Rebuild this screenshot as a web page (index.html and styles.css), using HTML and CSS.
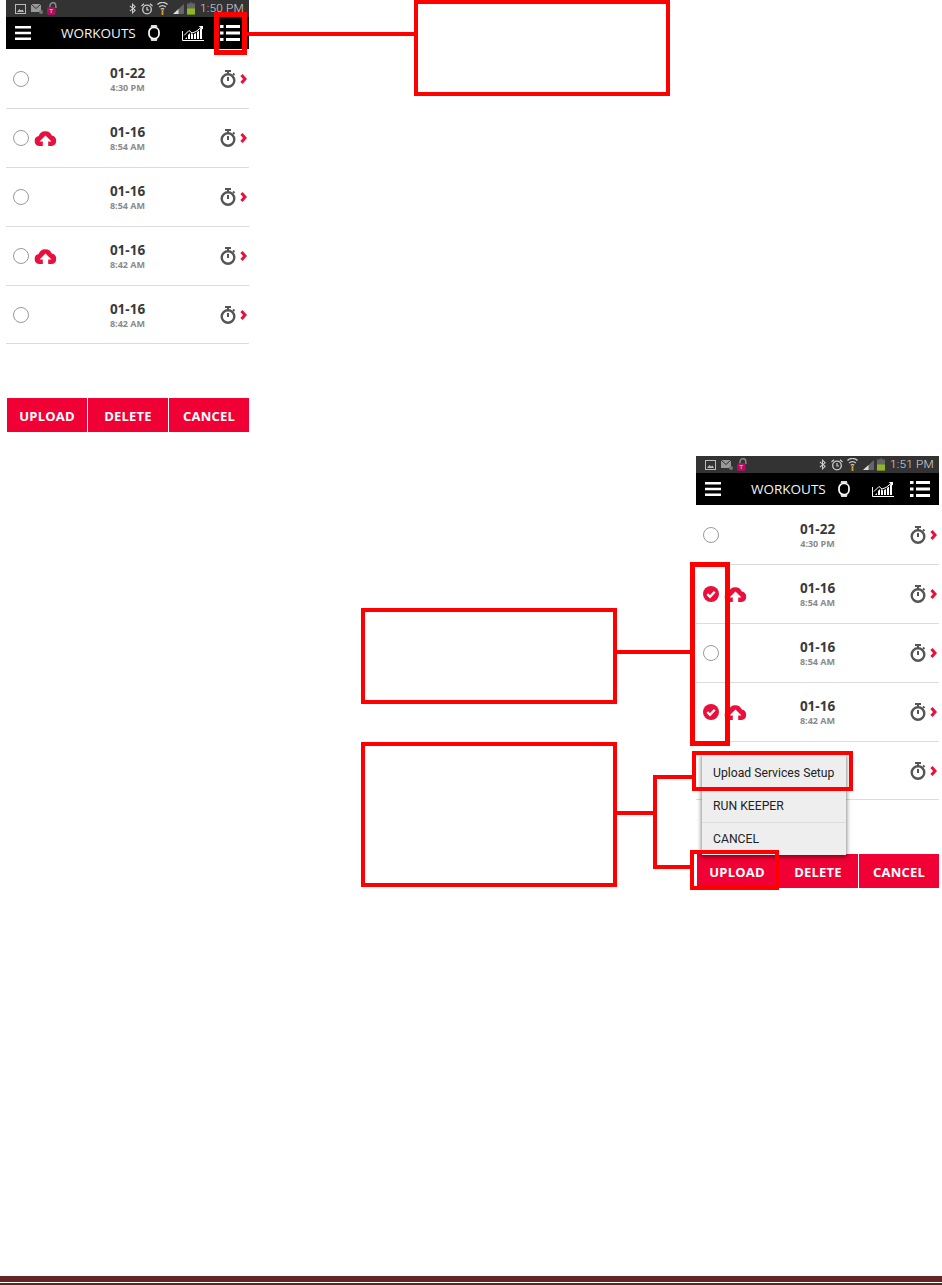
FILE: index.html
```html
<!DOCTYPE html>
<html lang="en">
<head>
<meta charset="utf-8">
<title>Workouts upload steps</title>
<link rel="stylesheet" href="styles.css">
</head>
<body>
<svg class="defs" width="0" height="0" aria-hidden="true">
  <symbol id="i-pic" viewBox="0 0 11 10"><rect x=".5" y=".5" width="10" height="9" fill="none" stroke="#bbb"/><path d="M2 8l2.500-3 1.500 1.500 1.500-1 1.500 2.500z" fill="#bbb"/></symbol>
  <symbol id="i-mail" viewBox="0 0 12 10"><rect x="0" y="0" width="10" height="8" fill="#999"/><path d="M0 0l5 4.500L10 0" fill="none" stroke="#333"/><circle cx="10" cy="8" r="2" fill="#777"/></symbol>
  <symbol id="i-lock" viewBox="0 0 10 13"><path d="M3 5V3.500a3 3 0 0 1 5.500-1.500L9 6" fill="none" stroke="#8a8a8a" stroke-width="1.500"/><rect x="0" y="5" width="8.500" height="8" rx="2" fill="#b01060"/><path d="M2.500 7.500h3.500M4.200 7.500v3.500" stroke="#e88ab8"/></symbol>
  <symbol id="i-bt" viewBox="0 0 8 12"><path d="M1 3l6 5-3 3V1l3 3-6 5" fill="none" stroke="#ccc" stroke-width="1.200"/></symbol>
  <symbol id="i-alarm" viewBox="0 0 12 12"><circle cx="6" cy="6.500" r="4.300" fill="none" stroke="#ccc" stroke-width="1.300"/><path d="M6 4v3h2M.5 3L3 .8M11.500 3L9 .8" fill="none" stroke="#ccc" stroke-width="1.200"/></symbol>
  <symbol id="i-wifi" viewBox="0 0 11 13"><path d="M.5 2.500a7 7 0 0 1 10 0M2.200 5a4.600 4.600 0 0 1 6.600 0M3.800 7.300a2.400 2.400 0 0 1 3.400 0" fill="none" stroke="#ccc" stroke-width="1.300"/><path d="M5.500 8v5" stroke="#d0a030" stroke-width="1.800"/></symbol>
  <symbol id="i-signal" viewBox="0 0 12 11"><path d="M0 11L12 0v11z" fill="#666"/><path d="M0 11l6-5.500V11z" fill="#ddd"/></symbol>
  <symbol id="i-battery" viewBox="0 0 8 12"><rect x="0" y="1" width="8" height="11" fill="#666"/><rect x="2.500" y="0" width="3" height="1" fill="#666"/><rect x="0" y="6" width="8" height="6" fill="#8fb820"/></symbol>
  <symbol id="i-menu" viewBox="0 0 16 14"><path d="M0 0h16v2.500H0zM0 5.700h16v2.500H0zM0 11.500h16V14H0z" fill="#fff"/></symbol>
  <symbol id="i-watch" viewBox="0 0 12 16"><path d="M3.200 0h5.600l.8 2.500H2.400zM2.400 13.500h7.200L8.800 16H3.200z" fill="#ddd"/><rect x="1" y="2.500" width="10" height="11" rx="4.500" fill="none" stroke="#fff" stroke-width="1.700"/></symbol>
  <symbol id="i-chart" viewBox="0 0 22 15"><path d="M.5 5v9.500H22" fill="none" stroke="#fff"/><path d="M3 13l2-2v2zM6 13V9l2-2v6zM9 13V7l2 1.500V13zM12 13V8l2-1v6zM15 13V6l2-1.500V13zM18 13V3l2-2v12z" fill="#fff"/><path d="M2 9.500l5-5 3 2.500 4-1.500 5-4" fill="none" stroke="#fff"/><path d="M16.500 0H21v3.500z" fill="#fff"/></symbol>
  <symbol id="i-list" viewBox="0 0 20 16"><path d="M0 0h3.500v3H0zM6 0h14v3H6zM0 6.500h3.500v3H0zM6 6.500h14v3H6zM0 13h3.500v3H0zM6 13h14v3H6z" fill="#fff"/></symbol>
  <symbol id="i-cloud" viewBox="0 0 23 15"><path d="M5.500 15a5 5 0 0 1-.8-9.900A7 7 0 0 1 17.800 4.600 5.300 5.300 0 0 1 18 15h-3.800v-4.500h3.300L11.500 4.500l-6 6h3.300V15z" fill="#e8103c"/></symbol>
  <symbol id="i-check" viewBox="0 0 16 16"><circle cx="8" cy="8" r="8" fill="#e8103c"/><path d="M4.300 8.200l2.700 2.600 4.700-5" fill="none" stroke="#fff" stroke-width="2.300"/></symbol>
  <symbol id="i-stopwatch" viewBox="0 0 16 18"><circle cx="8" cy="10.500" r="6.300" fill="none" stroke="#555" stroke-width="2.400"/><path d="M5 1h6M8 1v3M13 3.500l1.500 1.500M8 7v4" fill="none" stroke="#555" stroke-width="2"/></symbol>
  <symbol id="i-chevron" viewBox="0 0 7 10"><path d="M1.500 1l3.500 4-3.500 4" fill="none" stroke="#e8103c" stroke-width="3"/></symbol>
</svg>

<main class="canvas">
  <section class="phone phone-top">
    <div class="status">
      <svg class="st st-pic"><use href="#i-pic"/></svg><svg class="st st-mail"><use href="#i-mail"/></svg><svg class="st st-lock"><use href="#i-lock"/></svg>
      <span class="status-spacer"></span>
      <svg class="st st-bt"><use href="#i-bt"/></svg><svg class="st st-alarm"><use href="#i-alarm"/></svg><svg class="st st-wifi"><use href="#i-wifi"/></svg><svg class="st st-signal"><use href="#i-signal"/></svg><svg class="st st-battery"><use href="#i-battery"/></svg>
      <span class="clock">1:50 PM</span>
    </div>
    <header class="appbar">
      <svg class="ab-menu"><use href="#i-menu"/></svg>
      <span class="ab-title">WORKOUTS</span>
      <svg class="ab-watch"><use href="#i-watch"/></svg>
      <svg class="ab-chart"><use href="#i-chart"/></svg>
      <svg class="ab-list"><use href="#i-list"/></svg>
    </header>
    <ul class="rows">
      <li class="row"><div class="lead"><span class="radio"></span></div><div class="when"><b>01-22</b><small>4:30 PM</small></div><div class="trail"><svg class="stopwatch"><use href="#i-stopwatch"/></svg><svg class="chevron"><use href="#i-chevron"/></svg></div></li>
      <li class="row"><div class="lead"><span class="radio"></span><svg class="cloud"><use href="#i-cloud"/></svg></div><div class="when"><b>01-16</b><small>8:54 AM</small></div><div class="trail"><svg class="stopwatch"><use href="#i-stopwatch"/></svg><svg class="chevron"><use href="#i-chevron"/></svg></div></li>
      <li class="row"><div class="lead"><span class="radio"></span></div><div class="when"><b>01-16</b><small>8:54 AM</small></div><div class="trail"><svg class="stopwatch"><use href="#i-stopwatch"/></svg><svg class="chevron"><use href="#i-chevron"/></svg></div></li>
      <li class="row"><div class="lead"><span class="radio"></span><svg class="cloud"><use href="#i-cloud"/></svg></div><div class="when"><b>01-16</b><small>8:42 AM</small></div><div class="trail"><svg class="stopwatch"><use href="#i-stopwatch"/></svg><svg class="chevron"><use href="#i-chevron"/></svg></div></li>
      <li class="row"><div class="lead"><span class="radio"></span></div><div class="when"><b>01-16</b><small>8:42 AM</small></div><div class="trail"><svg class="stopwatch"><use href="#i-stopwatch"/></svg><svg class="chevron"><use href="#i-chevron"/></svg></div></li>
    </ul>
    <div class="actions"><span class="action">UPLOAD</span><span class="action">DELETE</span><span class="action">CANCEL</span></div>
  </section>

  <section class="phone phone-bottom">
    <div class="status">
      <svg class="st st-pic"><use href="#i-pic"/></svg><svg class="st st-mail"><use href="#i-mail"/></svg><svg class="st st-lock"><use href="#i-lock"/></svg>
      <span class="status-spacer"></span>
      <svg class="st st-bt"><use href="#i-bt"/></svg><svg class="st st-alarm"><use href="#i-alarm"/></svg><svg class="st st-wifi"><use href="#i-wifi"/></svg><svg class="st st-signal"><use href="#i-signal"/></svg><svg class="st st-battery"><use href="#i-battery"/></svg>
      <span class="clock">1:51 PM</span>
    </div>
    <header class="appbar">
      <svg class="ab-menu"><use href="#i-menu"/></svg>
      <span class="ab-title">WORKOUTS</span>
      <svg class="ab-watch"><use href="#i-watch"/></svg>
      <svg class="ab-chart"><use href="#i-chart"/></svg>
      <svg class="ab-list"><use href="#i-list"/></svg>
    </header>
    <ul class="rows">
      <li class="row"><div class="lead"><span class="radio"></span></div><div class="when"><b>01-22</b><small>4:30 PM</small></div><div class="trail"><svg class="stopwatch"><use href="#i-stopwatch"/></svg><svg class="chevron"><use href="#i-chevron"/></svg></div></li>
      <li class="row"><div class="lead"><svg class="check"><use href="#i-check"/></svg><svg class="cloud"><use href="#i-cloud"/></svg></div><div class="when"><b>01-16</b><small>8:54 AM</small></div><div class="trail"><svg class="stopwatch"><use href="#i-stopwatch"/></svg><svg class="chevron"><use href="#i-chevron"/></svg></div></li>
      <li class="row"><div class="lead"><span class="radio"></span></div><div class="when"><b>01-16</b><small>8:54 AM</small></div><div class="trail"><svg class="stopwatch"><use href="#i-stopwatch"/></svg><svg class="chevron"><use href="#i-chevron"/></svg></div></li>
      <li class="row"><div class="lead"><svg class="check"><use href="#i-check"/></svg><svg class="cloud"><use href="#i-cloud"/></svg></div><div class="when"><b>01-16</b><small>8:42 AM</small></div><div class="trail"><svg class="stopwatch"><use href="#i-stopwatch"/></svg><svg class="chevron"><use href="#i-chevron"/></svg></div></li>
      <li class="row"><div class="lead"></div><div class="when"></div><div class="trail"><svg class="stopwatch"><use href="#i-stopwatch"/></svg><svg class="chevron"><use href="#i-chevron"/></svg></div></li>
    </ul>
    <div class="actions"><span class="action">UPLOAD</span><span class="action">DELETE</span><span class="action">CANCEL</span></div>
    <div class="popup">
      <div class="popup-item">Upload Services Setup</div>
      <div class="popup-item">RUN KEEPER</div>
      <div class="popup-item">CANCEL</div>
    </div>
  </section>

  <div class="mark callout-1"></div>
  <div class="mark thick hl-list"></div>
  <div class="wire wire-1"></div>

  <div class="mark callout-2"></div>
  <div class="mark thick hl-radios"></div>
  <div class="wire wire-2"></div>

  <div class="mark callout-3"></div>
  <div class="mark hl-setup"></div>
  <div class="mark hl-upload"></div>
  <div class="wire wire-3a"></div>
  <div class="wire wire-3b"></div>
  <div class="wire wire-3c"></div>
  <div class="wire wire-3d"></div>
</main>

<footer class="rule"></footer>
</body>
</html>
```
FILE: styles.css
```css
* { box-sizing: border-box; }
html, body { margin: 0; padding: 0; background: #fff; }
body { width: 942px; height: 1285px; overflow: hidden; position: relative; font-family: "Open Sans", "Liberation Sans", sans-serif; }
.defs { position: absolute; }
.canvas { position: relative; width: 942px; height: 1276px; }

/* Phones sit on a free canvas */
.phone { position: absolute; width: 243px; height: 433px; display: flex; flex-direction: column; background: #fff; }
.phone-top { left: 6px; top: 0; }
.phone-bottom { left: 696px; top: 456px; }

.status { height: 17px; background: #333; display: flex; align-items: center; padding: 0 5px 0 9px; flex: none; }
.status-spacer { flex: 1; }
.st { flex: none; display: block; }
.st-pic { width: 11px; height: 10px; margin-right: 5px; }
.st-mail { width: 12px; height: 10px; margin-right: 4px; }
.st-lock { width: 10px; height: 13px; }
.st-bt { width: 7px; height: 11px; margin-right: 5px; }
.st-alarm { width: 12px; height: 12px; margin-right: 4px; }
.st-wifi { width: 11px; height: 13px; margin-right: 5px; }
.st-signal { width: 11px; height: 10px; margin-right: 3px; }
.st-battery { width: 8px; height: 13px; margin-right: 5px; }
.clock { font: 300 11.800px/17px Roboto, sans-serif; color: #d8d8d8; white-space: nowrap; width: 44px; letter-spacing: .2px; }

.appbar { height: 32px; background: #000; display: flex; align-items: center; padding-left: 9px; flex: none; }
.appbar svg { display: block; flex: none; }
.ab-menu { width: 16px; height: 14px; margin-right: 30px; }
.ab-title { font-size: 13.500px; line-height: 34px; color: #f4f4f4; width: 87px; flex: none; white-space: nowrap; font-weight: 400; }
.ab-watch { width: 12px; height: 16px; margin-right: 22px; }
.ab-chart { width: 22px; height: 15px; margin-right: 16px; }
.ab-list { width: 20px; height: 16px; }

.rows { list-style: none; margin: 0; padding: 1px 0 0; flex: none; }
.row { height: 59px; border-bottom: 1px solid #dcdcdc; display: grid; grid-template-columns: 1fr auto 1fr; align-items: center; }
.row:last-child { height: 58px; }
.lead { display: flex; align-items: center; padding-left: 7px; min-height: 16px; }
.radio { width: 16px; height: 16px; border-radius: 50%; border: 1px solid #9a9a9a; flex: none; background: #fff; }
.check { width: 16px; height: 16px; display: block; flex: none; }
.cloud { width: 23px; height: 15px; margin-left: 5px; display: block; flex: none; }
.when { display: flex; flex-direction: column; align-items: center; min-width: 36px; }
.when b { font-size: 13.500px; line-height: 17px; font-weight: 700; color: #3a3a3a; }
.when small { font-size: 9px; line-height: 11px; font-weight: 700; color: #8a8a8a; }
.trail { display: flex; align-items: center; justify-content: flex-end; padding-right: 2px; }
.stopwatch { width: 16px; height: 18px; display: block; margin-right: 4px; }
.chevron { width: 7px; height: 10px; display: block; }

.actions { margin-top: 54px; margin-left: 1px; height: 34px; display: flex; gap: 1px; }
.action { flex: 1; background: #f00035; color: #fff; font-size: 13px; font-weight: 700; display: flex; align-items: center; justify-content: center; letter-spacing: .2px; padding-top: 1px; }

.popup { position: absolute; left: 6px; top: 299px; width: 144px; height: 100px; background: #eee; box-shadow: 0 1px 4px 1px rgba(0,0,0,.45); display: flex; flex-direction: column; }
.popup-item { height: 33px; display: flex; align-items: center; padding-left: 11px; font: 400 12.200px Roboto, sans-serif; color: #222; border-top: 1px solid #ddd; }
.popup-item:first-child { height: 34px; padding-top: 1px; border-top: 0; }

/* Red annotations */
.mark { position: absolute; border: 4px solid #f00; }
.mark.thick { border-width: 5px; }
.wire { position: absolute; background: #f00; }
.callout-1 { left: 414px; top: 0; width: 256px; height: 96px; }
.hl-list { left: 214px; top: 12px; width: 33px; height: 43px; }
.wire-1 { left: 247px; top: 32px; width: 167px; height: 4px; }

.callout-2 { left: 361px; top: 608px; width: 256px; height: 96px; }
.hl-radios { left: 690px; top: 562px; width: 40px; height: 184px; }
.wire-2 { left: 617px; top: 650px; width: 73px; height: 4px; }

.callout-3 { left: 361px; top: 742px; width: 256px; height: 145px; }
.hl-setup { left: 692px; top: 751px; width: 161px; height: 40px; }
.hl-upload { left: 690px; top: 850px; width: 89px; height: 40px; }
.wire-3a { left: 617px; top: 811px; width: 36px; height: 4px; }
.wire-3b { left: 653px; top: 775px; width: 4px; height: 94px; }
.wire-3c { left: 657px; top: 775px; width: 35px; height: 4px; }
.wire-3d { left: 657px; top: 865px; width: 33px; height: 4px; }

/* Page footer rule */
.rule { height: 9px; background: #632423; position: relative; }
.rule::after { content: ""; display: block; height: 1px; background: #fff; position: relative; top: 6px; }
```
